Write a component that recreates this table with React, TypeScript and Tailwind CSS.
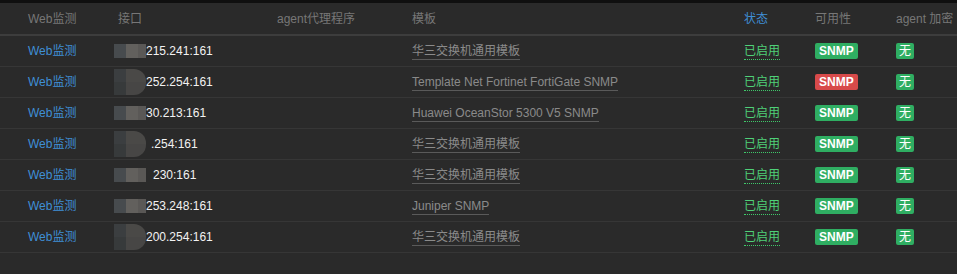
import React from 'react'

type Row = {
  ip: string
  shift: number
  tall: boolean
  template: string
  avail: 'ok' | 'bad'
}

const rows: Row[] = [
  { ip: '215.241:161', shift: 0, tall: false, template: '华三交换机通用模板', avail: 'ok' },
  { ip: '252.254:161', shift: 0, tall: true, template: 'Template Net Fortinet FortiGate SNMP', avail: 'bad' },
  { ip: '30.213:161', shift: 0, tall: false, template: 'Huawei OceanStor 5300 V5 SNMP', avail: 'ok' },
  { ip: '.254:161', shift: 5, tall: true, template: '华三交换机通用模板', avail: 'ok' },
  { ip: '230:161', shift: 7, tall: false, template: '华三交换机通用模板', avail: 'ok' },
  { ip: '253.248:161', shift: 0, tall: false, template: 'Juniper SNMP', avail: 'ok' },
  { ip: '200.254:161', shift: 0, tall: true, template: '华三交换机通用模板', avail: 'ok' },
]

// blurred out ip prefix
const Mask = ({ tall }: { tall: boolean }) =>
  tall ? (
    <div className="flex h-[26px] w-[32px] overflow-hidden rounded-r-[12px]">
      <div className="flex w-[12px] flex-col">
        <div className="h-1/2 bg-[#3b3e40]" />
        <div className="h-1/2 bg-[#373a3b]" />
      </div>
      <div className="flex flex-1 flex-col">
        <div className="h-1/2 bg-[#4a4947]" />
        <div className="h-1/2 bg-[#474645]" />
      </div>
    </div>
  ) : (
    <div className="flex h-[14px] w-[32px]">
      <div className="w-[12px] bg-[#474b4e]" />
      <div className="w-[12px] bg-[#62605d]" />
      <div className="flex-1 bg-[#5a5856]" />
    </div>
  )

export default function App() {
  return (
    <div
      className="h-[274px] w-[957px] bg-[#2a2a2a] text-[12px]"
      style={{ fontFamily: '"Liberation Sans", Arial, "Noto Sans CJK SC", sans-serif' }}
    >
      <div className="h-[3px] bg-[#0f0f0f]" />
      <div className="flex h-[33px] items-center border-b-2 border-[#3d3d3d] text-[#777]">
        <div className="w-[118px] pl-[28px]">Web监测</div>
        <div className="w-[159px]">接口</div>
        <div className="w-[135px]">agent代理程序</div>
        <div className="w-[332px]">模板</div>
        <div className="w-[71px] text-[#3f8fd6]">状态</div>
        <div className="w-[81px]">可用性</div>
        <div className="flex-1">agent 加密</div>
      </div>
      {rows.map((r, i) => (
        <div key={i} className="flex h-[31px] items-center border-b border-[#363636]">
          <div className="w-[118px] pl-[28px] text-[#3f8fd6]">Web监测</div>
          <div className="flex w-[159px] items-center">
            <div className="-ml-[4px]">
              <Mask tall={r.tall} />
            </div>
            <span className="text-[#f2f2f2]" style={{ marginLeft: r.shift }}>
              {r.ip}
            </span>
          </div>
          <div className="w-[135px]" />
          <div className="w-[332px]">
            <span className="border-b border-[#5a5a5a] pb-[1px] text-[#8a8a8a]">{r.template}</span>
          </div>
          <div className="w-[71px]">
            <span className="border-b border-dotted border-[#3fc96a] pb-[1px] text-[#4fd178]">已启用</span>
          </div>
          <div className="w-[81px]">
            <span
              className={
                'inline-block rounded-[2px] px-[4px] py-[1px] font-bold leading-[14px] text-white ' +
                (r.avail === 'ok' ? 'bg-[#2fae62]' : 'bg-[#d84a4a]')
              }
            >
              SNMP
            </span>
          </div>
          <div className="flex-1">
            <span className="inline-block rounded-[2px] bg-[#2fae62] px-[3px] py-[1px] leading-[14px] text-white">
              无
            </span>
          </div>
        </div>
      ))}
    </div>
  )
}
